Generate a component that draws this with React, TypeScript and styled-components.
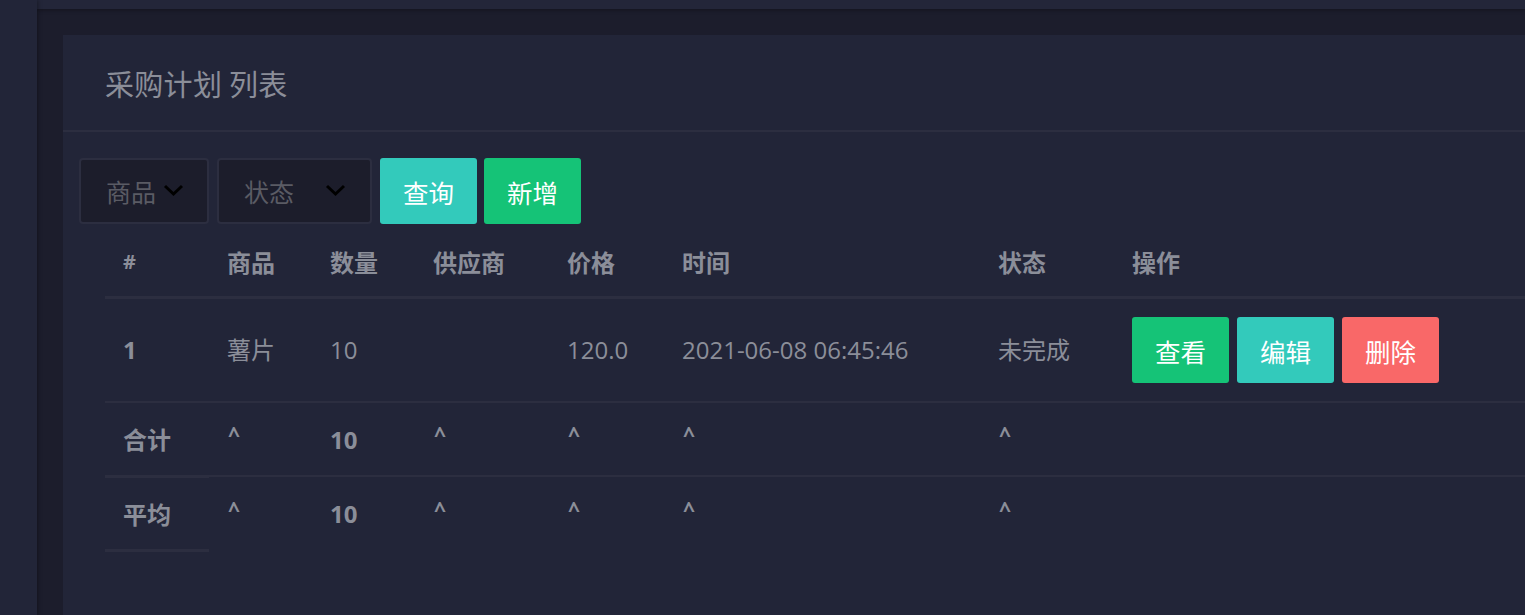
import styled, { createGlobalStyle } from "styled-components";

const GlobalStyle = createGlobalStyle`
    html, body {
        margin: 0;
        padding: 0;
        background: #1c1d2c;
        font-family: "Open Sans", "Noto Sans CJK SC", sans-serif;
        overflow: hidden;
    }
`;

const colors = {
    primary: "#33cabb",
    success: "#15c377",
    danger: "#f96868",
    text: "#8b8e99",
    border: "#2c2e40",
    card: "#222538",
};

const Layout = styled.div`
    display: flex;
    flex-direction: row;
    width: 1525px;
    height: 615px;
`;

const Sidebar = styled.aside`
    width: 37px;
    flex-shrink: 0;
    background: #222538;
    box-shadow: 1px 0 4px rgba(0, 0, 0, 0.35);
    position: relative;
    z-index: 2;
`;

const Main = styled.div`
    flex: 1;
    display: flex;
    flex-direction: column;
    min-width: 0;
`;

const TopBar = styled.header`
    height: 9px;
    background: #232639;
    box-shadow: 0 1px 4px rgba(0, 0, 0, 0.35);
    position: relative;
    z-index: 1;
`;

const Content = styled.div`
    padding: 26px 0 0 26px;
    flex: 1;
    display: flex;
`;

const Card = styled.section`
    flex: 1;
    background: ${colors.card};
    display: flex;
    flex-direction: column;
`;

const CardHeader = styled.div`
    height: 95px;
    display: flex;
    align-items: center;
    padding: 0 42px;
    border-bottom: 2px solid ${colors.border};
`;

const CardTitle = styled.h4`
    margin: 0;
    font-family: "Noto Sans CJK SC", sans-serif;
    font-weight: 400;
    font-size: 29px;
    color: ${colors.text};
    letter-spacing: 0.3px;
`;

const CardBody = styled.div`
    padding: 26px 0 0 16px;
`;

const FilterRow = styled.div`
    display: flex;
    flex-direction: row;
    gap: 7px;
    height: 66px;
`;

const SelectBox = styled.div<{ $width: number; $gap: number }>`
    width: ${p => p.$width}px;
    box-sizing: border-box;
    display: flex;
    align-items: center;
    gap: ${p => p.$gap}px;
    padding-left: 25px;
    background: #1c1d2b;
    border: 2px solid ${colors.border};
    border-radius: 4px;
    margin-right: 1px;
    font-family: "Noto Sans CJK SC", sans-serif;
    font-size: 25px;
    color: #5a5b64;
    svg {
        margin-top: -2px;
    }
`;

const Button = styled.button<{ $color: string }>`
    height: 66px;
    padding: 0 23px;
    border: none;
    border-radius: 3px;
    background: ${p => p.$color};
    color: #fff;
    font-family: "Noto Sans CJK SC", sans-serif;
    font-size: 25.5px;
    cursor: pointer;
`;

const Table = styled.table`
    margin: 4px 0 0 26px;
    width: calc(100% - 26px);
    border-collapse: collapse;
    color: ${colors.text};
    font-size: 24px;
`;

const Th = styled.th<{ $width?: number }>`
    width: ${p => (p.$width ? `${p.$width}px` : "auto")};
    box-sizing: border-box;
    text-align: left;
    padding: 15px 18px 15px;
    line-height: 38px;
    font-family: "Noto Sans CJK SC", sans-serif;
    font-weight: 700;
    font-size: 24px;
    border-bottom: 3px solid ${colors.border};
`;

const HashTh = styled(Th)`
    font-family: "Open Sans", sans-serif;
    font-size: 20px;
`;

const Td = styled.td<{ $bold?: boolean }>`
    padding: 18px 18px;
    line-height: 38px;
    border-top: 2px solid ${colors.border};
    font-weight: ${p => (p.$bold ? 700 : 400)};
    white-space: nowrap;
`;

const RowTh = styled.th`
    text-align: left;
    padding: 17px 18px 16px;
    line-height: 38px;
    font-family: "Noto Sans CJK SC", sans-serif;
    font-weight: 700;
    font-size: 24px;
    border-top: 2px solid ${colors.border};
    border-bottom: 3px solid ${colors.border};
`;

const NumTh = styled(RowTh)`
    font-family: "Open Sans", sans-serif;
    border-bottom: none;
    padding: 18px;
`;

const Caret = styled.span`
    display: inline-block;
    padding-left: 1px;
    transform: translateY(-6px);
    font-weight: 700;
    font-size: 21px;
`;

const Actions = styled.div`
    display: flex;
    flex-direction: row;
    gap: 8px;
`;

const FootRow = styled.tr`
    td {
        padding-top: 17px;
        padding-bottom: 16px;
    }
`;

function Chevron() {
    return (
        <svg width="21" height="13" viewBox="0 0 21 13">
            <path d="M2 2 L10.5 10 L19 2" fill="none" stroke="#000" strokeWidth="3" />
        </svg>
    );
}

const columns = [
    { label: "#", width: 104 },
    { label: "商品", width: 103 },
    { label: "数量", width: 103 },
    { label: "供应商", width: 134 },
    { label: "价格", width: 115 },
    { label: "时间", width: 316 },
    { label: "状态", width: 134 },
    { label: "操作" },
];

const footRows = ["合计", "平均"];

export default function App() {
    return (
        <>
            <GlobalStyle />
            <Layout>
                <Sidebar />
                <Main>
                    <TopBar />
                    <Content>
                        <Card>
                            <CardHeader>
                                <CardTitle>采购计划 列表</CardTitle>
                            </CardHeader>
                            <CardBody>
                                <FilterRow>
                                    <SelectBox $width={130} $gap={7}>
                                        商品
                                        <Chevron />
                                    </SelectBox>
                                    <SelectBox $width={155} $gap={31}>
                                        状态
                                        <Chevron />
                                    </SelectBox>
                                    <Button $color={colors.primary}>查询</Button>
                                    <Button $color={colors.success}>新增</Button>
                                </FilterRow>
                                <Table>
                                    <thead>
                                        <tr>
                                            {columns.map(c =>
                                                c.label === "#" ? (
                                                    <HashTh key={c.label} $width={c.width}>
                                                        #
                                                    </HashTh>
                                                ) : (
                                                    <Th key={c.label} $width={c.width}>
                                                        {c.label}
                                                    </Th>
                                                )
                                            )}
                                        </tr>
                                    </thead>
                                    <tbody>
                                        <tr>
                                            <NumTh>1</NumTh>
                                            <Td>薯片</Td>
                                            <Td>10</Td>
                                            <Td></Td>
                                            <Td>120.0</Td>
                                            <Td>2021-06-08 06:45:46</Td>
                                            <Td>未完成</Td>
                                            <Td>
                                                <Actions>
                                                    <Button $color={colors.success}>查看</Button>
                                                    <Button $color={colors.primary}>编辑</Button>
                                                    <Button $color={colors.danger}>删除</Button>
                                                </Actions>
                                            </Td>
                                        </tr>
                                        {footRows.map(label => (
                                            <FootRow key={label}>
                                                <RowTh>{label}</RowTh>
                                                <Td><Caret>^</Caret></Td>
                                                <Td $bold>10</Td>
                                                <Td><Caret>^</Caret></Td>
                                                <Td><Caret>^</Caret></Td>
                                                <Td><Caret>^</Caret></Td>
                                                <Td><Caret>^</Caret></Td>
                                                <Td></Td>
                                            </FootRow>
                                        ))}
                                    </tbody>
                                </Table>
                            </CardBody>
                        </Card>
                    </Content>
                </Main>
            </Layout>
        </>
    );
}
